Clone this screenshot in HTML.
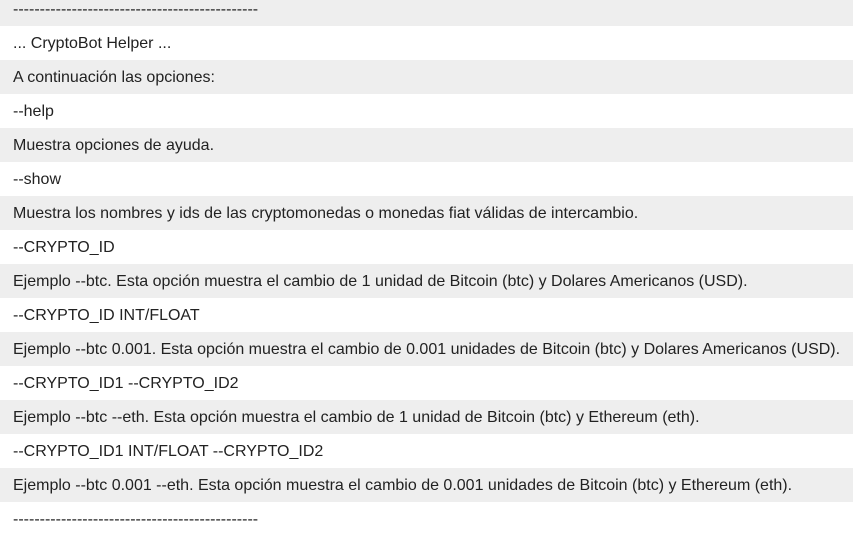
<!DOCTYPE html>
<html><head><style>
html,body{margin:0;padding:0;background:#fff;width:854px;height:533px;overflow:hidden}
.r{position:absolute;left:0;width:853px;height:34px;font:16px "Liberation Sans",sans-serif;color:#222;line-height:36px;padding-left:13px;box-sizing:border-box;white-space:nowrap}
.g{background:#eeeeee}
</style></head><body>
<div class="r g" style="top:-8px">----------------------------------------------</div>
<div class="r" style="top:26px">... CryptoBot Helper ...</div>
<div class="r g" style="top:60px">A continuación las opciones:</div>
<div class="r" style="top:94px">--help</div>
<div class="r g" style="top:128px">Muestra opciones de ayuda.</div>
<div class="r" style="top:162px">--show</div>
<div class="r g" style="top:196px">Muestra los nombres y ids de las cryptomonedas o monedas fiat válidas de intercambio.</div>
<div class="r" style="top:230px">--CRYPTO_ID</div>
<div class="r g" style="top:264px">Ejemplo --btc. Esta opción muestra el cambio de 1 unidad de Bitcoin (btc) y Dolares Americanos (USD).</div>
<div class="r" style="top:298px">--CRYPTO_ID INT/FLOAT</div>
<div class="r g" style="top:332px">Ejemplo --btc 0.001. Esta opción muestra el cambio de 0.001 unidades de Bitcoin (btc) y Dolares Americanos (USD).</div>
<div class="r" style="top:366px">--CRYPTO_ID1 --CRYPTO_ID2</div>
<div class="r g" style="top:400px">Ejemplo --btc --eth. Esta opción muestra el cambio de 1 unidad de Bitcoin (btc) y Ethereum (eth).</div>
<div class="r" style="top:434px">--CRYPTO_ID1 INT/FLOAT --CRYPTO_ID2</div>
<div class="r g" style="top:468px">Ejemplo --btc 0.001 --eth. Esta opción muestra el cambio de 0.001 unidades de Bitcoin (btc) y Ethereum (eth).</div>
<div class="r" style="top:502px">----------------------------------------------</div>
</body></html>
